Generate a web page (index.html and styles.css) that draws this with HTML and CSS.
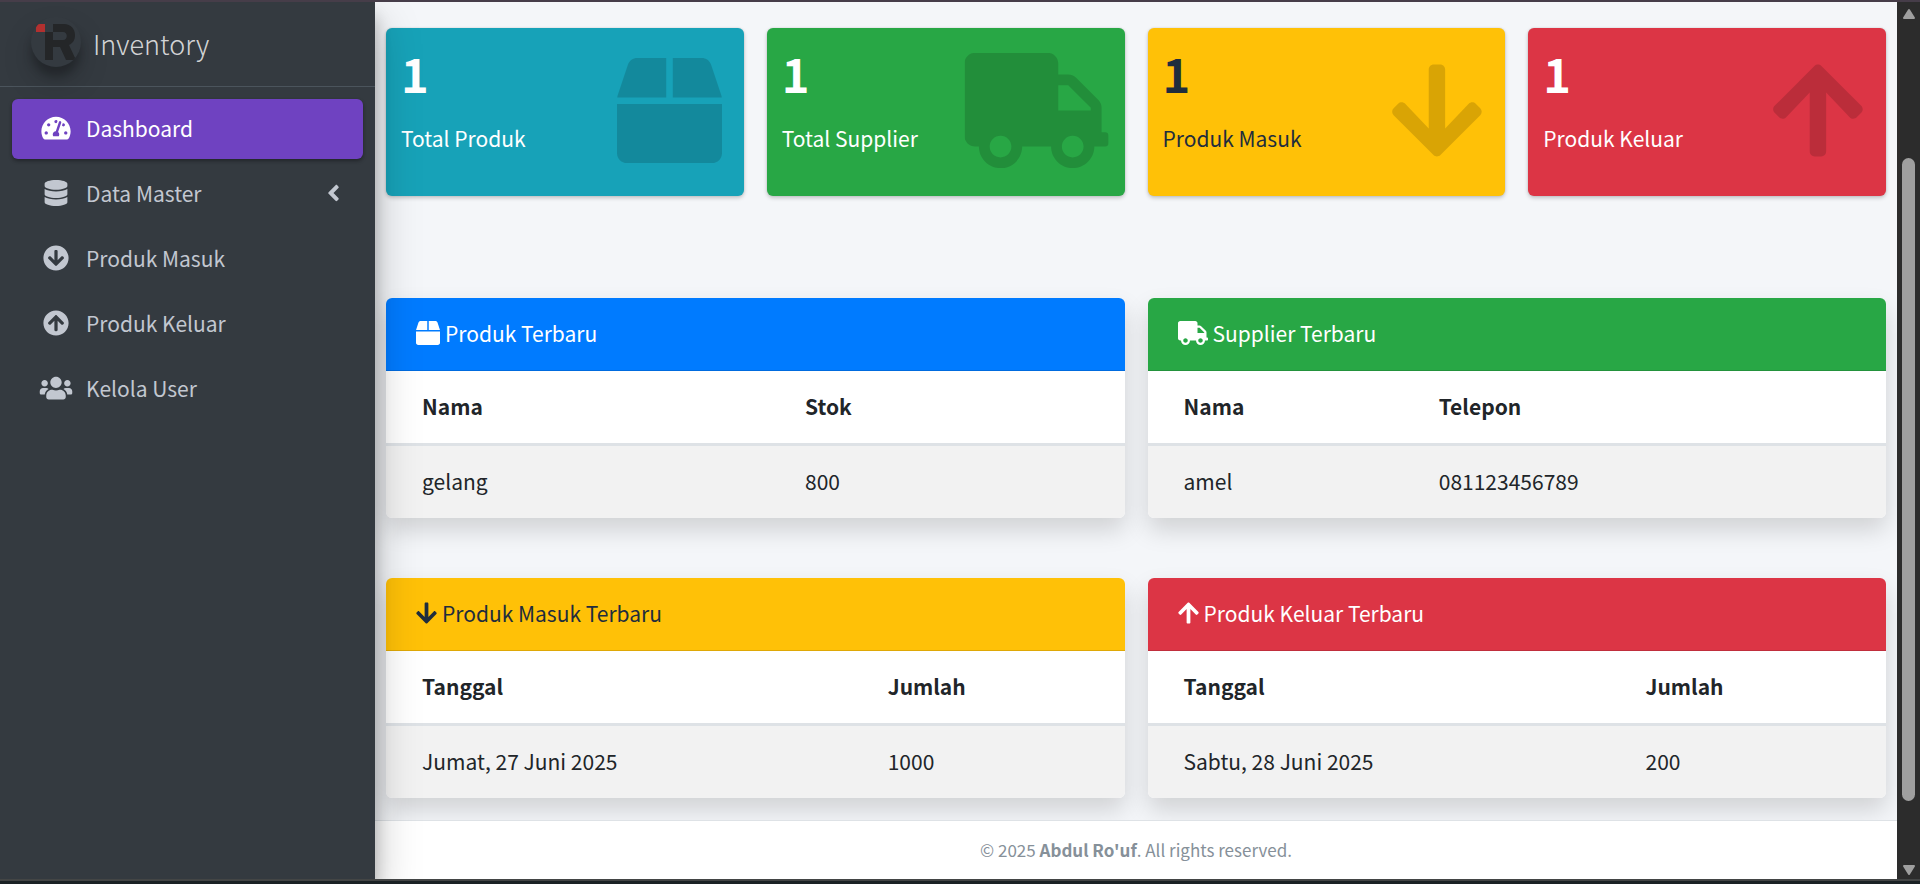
FILE: index.html
```html
<!DOCTYPE html>
<html lang="id">
<head>
<meta charset="utf-8">
<title>Inventory - Dashboard</title>
<meta name="viewport" content="width=device-width, initial-scale=1">
<link rel="stylesheet" href="styles.css">
</head>
<body>
<svg class="sprite" aria-hidden="true">
  <symbol id="i-gauge" viewBox="0 0 576 512"><path d="M288 32C128.94 32 0 160.94 0 320c0 52.8 14.25 102.26 39.06 144.8 5.61 9.62 16.3 15.2 27.44 15.2h443c11.14 0 21.83-5.58 27.44-15.2C561.75 422.26 576 372.8 576 320c0-159.06-128.94-288-288-288zm0 64c14.71 0 26.58 10.13 30.32 23.65-1.11 2.26-2.64 4.23-3.45 6.67l-9.22 27.67c-5.13 3.49-10.97 6.01-17.64 6.01-17.67 0-32-14.33-32-32S270.33 96 288 96zM96 384c-17.67 0-32-14.33-32-32s14.33-32 32-32 32 14.33 32 32-14.33 32-32 32zm48-160c-17.67 0-32-14.33-32-32s14.33-32 32-32 32 14.33 32 32-14.33 32-32 32zm246.77-72.41l-61.33 184C343.13 347.33 352 364.54 352 384c0 11.72-3.38 22.55-8.88 32H232.88c-5.5-9.45-8.88-20.28-8.88-32 0-33.94 26.5-61.43 59.9-63.59l61.34-184.01c4.17-12.56 17.73-19.45 30.36-15.17 12.57 4.19 19.35 17.79 15.17 30.36zm14.66 57.2l15.52-46.55c3.47-1.29 7.13-2.23 11.05-2.23 17.67 0 32 14.33 32 32s-14.33 32-32 32c-11.38-.01-20.89-6.28-26.57-15.22zM480 384c-17.67 0-32-14.33-32-32s14.33-32 32-32 32 14.33 32 32-14.33 32-32 32z"/></symbol>
  <symbol id="i-database" viewBox="0 0 448 512"><path d="M448 73.143v45.714C448 159.143 347.667 192 224 192S0 159.143 0 118.857V73.143C0 32.857 100.333 0 224 0s224 32.857 224 73.143zM448 176v102.857C448 319.143 347.667 352 224 352S0 319.143 0 278.857V176c48.125 33.143 136.208 48.572 224 48.572S399.874 209.143 448 176zm0 160v102.857C448 479.143 347.667 512 224 512S0 479.143 0 438.857V336c48.125 33.143 136.208 48.572 224 48.572S399.874 369.143 448 336z"/></symbol>
  <symbol id="i-circle-down" viewBox="0 0 512 512"><path d="M504 256c0 137-111 248-248 248S8 393 8 256 119 8 256 8s248 111 248 248zm-143.6-28.9L288 302.6V120c0-13.3-10.7-24-24-24h-16c-13.3 0-24 10.7-24 24v182.6l-72.4-75.5c-9.3-9.7-24.8-9.9-34.3-.4l-10.9 11c-9.4 9.4-9.4 24.6 0 33.9L239 404.3c9.4 9.4 24.6 9.4 33.9 0l132.7-132.7c9.4-9.4 9.4-24.6 0-33.9l-10.9-11c-9.5-9.5-25-9.3-34.3.4z"/></symbol>
  <symbol id="i-circle-up" viewBox="0 0 512 512"><path transform="rotate(180 256 256)" d="M504 256c0 137-111 248-248 248S8 393 8 256 119 8 256 8s248 111 248 248zm-143.6-28.9L288 302.6V120c0-13.3-10.7-24-24-24h-16c-13.3 0-24 10.7-24 24v182.6l-72.4-75.5c-9.3-9.7-24.8-9.9-34.3-.4l-10.9 11c-9.4 9.4-9.4 24.6 0 33.9L239 404.3c9.4 9.4 24.6 9.4 33.9 0l132.7-132.7c9.4-9.4 9.4-24.6 0-33.9l-10.9-11c-9.5-9.5-25-9.3-34.3.4z"/></symbol>
  <symbol id="i-users" viewBox="0 0 640 512"><path d="M96 224c35.3 0 64-28.7 64-64s-28.7-64-64-64-64 28.7-64 64 28.7 64 64 64zm448 0c35.3 0 64-28.7 64-64s-28.7-64-64-64-64 28.7-64 64 28.7 64 64 64zm32 32h-64c-17.6 0-33.5 7.1-45.1 18.6 40.3 22.1 68.9 62 75.1 109.4h66c17.7 0 32-14.3 32-32v-32c0-35.3-28.7-64-64-64zm-256 0c61.9 0 112-50.1 112-112S381.9 32 320 32 208 82.1 208 144s50.1 112 112 112zm76.8 32h-8.3c-20.8 10-43.9 16-68.5 16s-47.6-6-68.5-16h-8.3C179.6 288 128 339.6 128 403.2V432c0 26.5 21.5 48 48 48h288c26.5 0 48-21.5 48-48v-28.8c0-63.6-51.6-115.2-115.2-115.2zm-223.7-13.4C161.5 263.1 145.6 256 128 256H64c-35.3 0-64 28.7-64 64v32c0 17.7 14.3 32 32 32h65.9c6.3-47.4 34.9-87.3 75.2-109.4z"/></symbol>
  <symbol id="i-angle-left" viewBox="0 0 256 512"><path d="M31.7 239l136-136c9.4-9.4 24.6-9.4 33.9 0l22.6 22.6c9.4 9.4 9.4 24.6 0 33.9L127.9 256l96.4 96.4c9.4 9.4 9.4 24.6 0 33.9L201.7 409c-9.4 9.4-24.6 9.4-33.9 0l-136-136c-9.5-9.4-9.5-24.6-.1-34z"/></symbol>
  <symbol id="i-box" viewBox="0 0 512 512"><path d="M509.5 184.6L458.9 32.8C452.4 13.2 434.1 0 413.4 0H272v192h238.7c-.4-2.5-.4-5-1.2-7.4zM240 0H98.6c-20.7 0-39 13.2-45.5 32.8L2.5 184.6c-.8 2.4-.8 4.9-1.2 7.4H240V0zM0 224v240c0 26.5 21.5 48 48 48h416c26.5 0 48-21.5 48-48V224H0z"/></symbol>
  <symbol id="i-truck" viewBox="0 0 640 512"><path d="M624 352h-16V243.9c0-12.7-5.1-24.9-14.1-33.9L494 110.1c-9-9-21.2-14.1-33.9-14.1H416V48c0-26.5-21.5-48-48-48H48C21.5 0 0 21.5 0 48v320c0 26.5 21.5 48 48 48h16c0 53 43 96 96 96s96-43 96-96h128c0 53 43 96 96 96s96-43 96-96h48c8.8 0 16-7.2 16-16v-32c0-8.8-7.2-16-16-16zM160 464c-26.5 0-48-21.5-48-48s21.5-48 48-48 48 21.5 48 48-21.5 48-48 48zm320 0c-26.5 0-48-21.5-48-48s21.5-48 48-48 48 21.5 48 48-21.5 48-48 48zm80-208H416V144h44.1l99.9 99.9V256z"/></symbol>
  <symbol id="i-arrow-down" viewBox="0 0 448 512"><path d="M413.1 222.5l22.2 22.2c9.4 9.4 9.4 24.6 0 33.9L241 473c-9.4 9.4-24.6 9.4-33.9 0L12.7 278.6c-9.4-9.4-9.4-24.6 0-33.9l22.2-22.2c9.5-9.5 25-9.3 34.3.4L184 343.4V56c0-13.3 10.7-24 24-24h32c13.3 0 24 10.7 24 24v287.4l114.8-120.5c9.3-9.8 24.8-10 34.3-.4z"/></symbol>
  <symbol id="i-arrow-up" viewBox="0 0 448 512"><path d="M34.9 289.5l-22.2-22.2c-9.4-9.4-9.4-24.6 0-33.9L207 39c9.4-9.4 24.6-9.4 33.9 0l194.3 194.3c9.4 9.4 9.4 24.6 0 33.9L413 289.4c-9.5 9.5-25 9.3-34.3-.4L264 168.6V456c0 13.3-10.7 24-24 24h-32c-13.3 0-24-10.7-24-24V168.6L69.2 289.1c-9.3 9.8-24.8 10.1-34.3.4z"/></symbol>
</svg>

<div class="layout">
  <aside class="sidebar">
    <a class="brand" href="#">
      <svg class="brand-logo" viewBox="0 0 50 50" aria-hidden="true">
        <path fill="#b2302f" d="M9 7h5v8H5v-4a4 4 0 0 1 4-4z"/>
        <path fill="#242628" fill-rule="evenodd" d="M22 7h11c7 0 11 5 11 11 0 5-2 8-6 10l7 15H35L29 30h-7v13h-8V15h8zM22 15v8h10c5 0 5-8 0-8z"/>
      </svg>
      <span class="brand-name">Inventory</span>
    </a>
    <nav>
      <ul class="menu">
        <li><a class="menu-link is-active" href="#"><svg class="menu-icon"><use href="#i-gauge"/></svg><span>Dashboard</span></a></li>
        <li><a class="menu-link" href="#"><svg class="menu-icon"><use href="#i-database"/></svg><span>Data Master</span><svg class="menu-caret"><use href="#i-angle-left"/></svg></a></li>
        <li><a class="menu-link" href="#"><svg class="menu-icon"><use href="#i-circle-down"/></svg><span>Produk Masuk</span></a></li>
        <li><a class="menu-link" href="#"><svg class="menu-icon"><use href="#i-circle-up"/></svg><span>Produk Keluar</span></a></li>
        <li><a class="menu-link" href="#"><svg class="menu-icon"><use href="#i-users"/></svg><span>Kelola User</span></a></li>
      </ul>
    </nav>
  </aside>

  <div class="page">
    <main class="content">
      <section class="stats">
        <article class="stat info"><div><h3>1</h3><p>Total Produk</p></div><svg class="stat-icon" viewBox="0 0 512 512"><use href="#i-box"/></svg></article>
        <article class="stat success"><div><h3>1</h3><p>Total Supplier</p></div><svg class="stat-icon is-zoomed" viewBox="0 0 640 512"><use href="#i-truck"/></svg></article>
        <article class="stat warning"><div><h3>1</h3><p>Produk Masuk</p></div><svg class="stat-icon" viewBox="0 0 448 512"><use href="#i-arrow-down"/></svg></article>
        <article class="stat danger"><div><h3>1</h3><p>Produk Keluar</p></div><svg class="stat-icon" viewBox="0 0 448 512"><use href="#i-arrow-up"/></svg></article>
      </section>

      <section class="panels">
        <article class="card">
          <h2 class="card-header primary"><svg class="head-icon" viewBox="0 0 512 512"><use href="#i-box"/></svg>Produk Terbaru</h2>
          <table>
            <thead><tr><th scope="col" class="col-product">Nama</th><th scope="col">Stok</th></tr></thead>
            <tbody><tr><td>gelang</td><td>800</td></tr></tbody>
          </table>
        </article>
        <article class="card">
          <h2 class="card-header success"><svg class="head-icon" viewBox="0 0 640 512"><use href="#i-truck"/></svg>Supplier Terbaru</h2>
          <table>
            <thead><tr><th scope="col" class="col-supplier">Nama</th><th scope="col">Telepon</th></tr></thead>
            <tbody><tr><td>amel</td><td>081123456789</td></tr></tbody>
          </table>
        </article>
        <article class="card">
          <h2 class="card-header warning"><svg class="head-icon" viewBox="0 0 448 512"><use href="#i-arrow-down"/></svg>Produk Masuk Terbaru</h2>
          <table>
            <thead><tr><th scope="col" class="col-date-in">Tanggal</th><th scope="col">Jumlah</th></tr></thead>
            <tbody><tr><td>Jumat, 27 Juni 2025</td><td>1000</td></tr></tbody>
          </table>
        </article>
        <article class="card">
          <h2 class="card-header danger"><svg class="head-icon" viewBox="0 0 448 512"><use href="#i-arrow-up"/></svg>Produk Keluar Terbaru</h2>
          <table>
            <thead><tr><th scope="col" class="col-date-out">Tanggal</th><th scope="col">Jumlah</th></tr></thead>
            <tbody><tr><td>Sabtu, 28 Juni 2025</td><td>200</td></tr></tbody>
          </table>
        </article>
      </section>
    </main>
    <footer class="footer">© 2025 <strong>Abdul Ro'uf</strong>. All rights reserved.</footer>
  </div>

  <div class="scrollbar" aria-hidden="true">
    <svg class="scroll-arrow" viewBox="0 0 14 12"><path d="M7 2L12 10H2z"/></svg>
    <div class="scroll-track"><div class="scroll-thumb"></div></div>
    <svg class="scroll-arrow" viewBox="0 0 14 12"><path d="M7 10L2 2h10z"/></svg>
  </div>
</div>
</body>
</html>
```

FILE: styles.css
```css
* {
  box-sizing: border-box;
}

body {
  margin: 0;
  display: flex;
  flex-direction: column;
  min-height: 100vh;
  border-top: 2px solid #463d49;
  border-bottom: 3px solid #1a2224;
  background: #f4f6f9;
  color: #212529;
  font-family: "Source Sans Pro", "Noto Sans CJK SC", "Noto Sans", sans-serif;
  font-size: 21px;
  line-height: 36px;
}

h2,
h3,
p,
ul {
  margin: 0;
  padding: 0;
  font-size: inherit;
  font-weight: 400;
}

a {
  color: inherit;
  text-decoration: none;
}

svg {
  fill: currentColor;
}

.sprite {
  display: none;
}

.layout {
  flex: 1;
  display: grid;
  grid-template-columns: 375px minmax(0, 1fr) 23px;
  border-bottom: 2px solid #434545;
}

/* Sidebar */
.sidebar {
  position: relative;
  z-index: 2;
  background: #343a40;
  color: #c2c7d0;
  clip-path: inset(0 -80px 0 0);
  box-shadow: 0 21px 42px rgba(0, 0, 0, .25), 0 15px 15px rgba(0, 0, 0, .22);
}

.brand {
  display: flex;
  align-items: center;
  gap: 12px;
  height: 85px;
  padding: 0 31px;
  border-bottom: 1px solid #4b545c;
  color: rgba(255, 255, 255, .8);
}

.brand-logo {
  width: 50px;
  height: 50px;
  margin-bottom: 4px;
  border-radius: 50%;
  box-shadow: 0 15px 30px rgba(0, 0, 0, .19), 0 9px 9px rgba(0, 0, 0, .23);
}

.brand-name {
  font-size: 27px;
  font-weight: 300;
}

.menu {
  display: flex;
  flex-direction: column;
  gap: 5px;
  padding: 12px;
  list-style: none;
}

.menu-link {
  display: flex;
  align-items: center;
  gap: 10px;
  height: 60px;
  padding: 0 23px 3px 24px;
  border-radius: 6px;
}

.menu-link.is-active {
  background: #6f42c1;
  color: #fff;
  box-shadow: 0 2px 4px rgba(0, 0, 0, .24), 0 2px 3px rgba(0, 0, 0, .12);
}

.menu-icon {
  width: 40px;
  height: 26px;
}

.menu-caret {
  width: 13px;
  height: 26px;
  margin-left: auto;
}

/* Page */
.page {
  display: flex;
  flex-direction: column;
}

.content {
  flex: 1;
  padding: 26px 11px 22px;
}

.stats {
  display: grid;
  grid-template-columns: repeat(4, 1fr);
  gap: 23px;
  margin-bottom: 102px;
}

.stat {
  display: flex;
  justify-content: space-between;
  padding: 15px 22px 33px 15px;
  border-radius: 6px;
  box-shadow: 0 0 2px rgba(0, 0, 0, .13), 0 2px 4px rgba(0, 0, 0, .2);
}

.stat h3 {
  margin-bottom: 18px;
  font-size: 47px;
  font-weight: 700;
  line-height: 59px;
}

.stat-icon {
  height: 105px;
  margin-top: 15px;
  color: rgba(0, 0, 0, .15);
}

.stat-icon.is-zoomed {
  transform: scale(1.1);
}

.info {
  background: #17a2b8;
  color: #fff;
}

.success {
  background: #28a745;
  color: #fff;
}

.warning {
  background: #ffc107;
  color: #1f2d3d;
}

.danger {
  background: #dc3545;
  color: #fff;
}

.primary {
  background: #007bff;
  color: #fff;
}

.panels {
  display: grid;
  grid-template-columns: repeat(2, 1fr);
  gap: 60px 23px;
}

.card {
  border-radius: 6px;
  background: #fff;
  box-shadow: 0 12px 24px rgba(0, 0, 0, .15);
}

.card-header {
  display: flex;
  align-items: center;
  gap: 5px;
  padding: 17px 30px 19px;
  border-bottom: 1px solid rgba(0, 0, 0, .125);
  border-radius: 6px 6px 0 0;
}

.head-icon {
  height: 24px;
}

table {
  width: 100%;
  border-spacing: 0;
}

th,
td {
  padding: 17px 18px 19px;
  text-align: left;
}

th:first-child,
td:first-child {
  padding-left: 36px;
}

th {
  border-bottom: 3px solid #dee2e6;
}

td {
  background: #f2f2f2;
}

td:first-child {
  border-bottom-left-radius: 6px;
}

td:last-child {
  border-bottom-right-radius: 6px;
}

.col-product {
  width: 54.3%;
}

.col-supplier {
  width: 37%;
}

.col-date-in {
  width: 65.5%;
}

.col-date-out {
  width: 65%;
}

.footer {
  padding: 11px 24px;
  border-top: 1px solid #dee2e6;
  background: #fff;
  color: #869099;
  font-size: 17px;
  text-align: center;
}

/* Scrollbar */
.scrollbar {
  display: flex;
  flex-direction: column;
  align-items: center;
  gap: 4px;
  padding: 6px 0 3px;
  background: #2c2c2c;
  color: #9f9f9f;
}

.scroll-arrow {
  width: 14px;
  height: 12px;
  stroke: currentColor;
  stroke-width: 2;
  stroke-linejoin: round;
}

.scroll-track {
  flex: 1;
  display: grid;
  grid-template-rows: 16fr 77fr 7fr;
}

.scroll-thumb {
  grid-row: 2;
  width: 13px;
  border-radius: 7px;
  background: #9f9f9f;
}
```
